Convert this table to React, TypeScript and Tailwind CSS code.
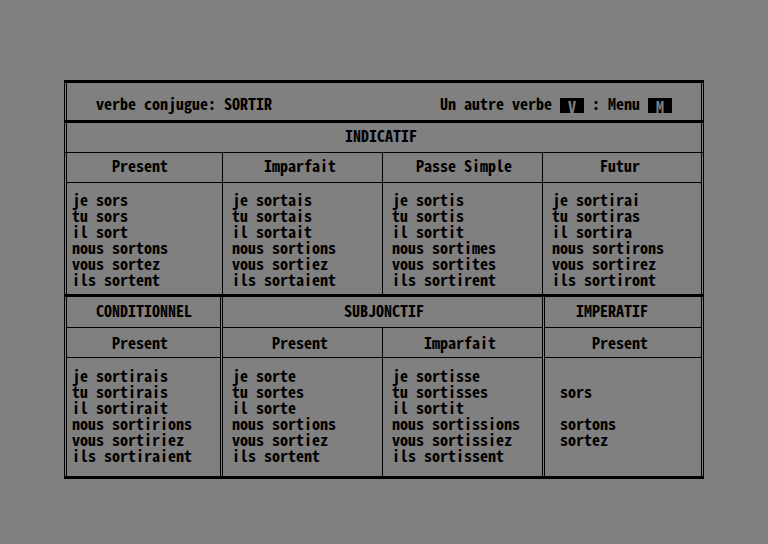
import React from "react";

type Col = {
    title: string;
    box: string;
    tpl: string;
    dpl: string;
    lines: string[];
};

const Line: React.FC<{ text: string }> = ({ text }) => (
    <div className="h-4 leading-4 whitespace-pre">{text}</div>
);

const topCols: Col[] = [
    {
        title: "Present", box: "w-[156px] border-r", tpl: "pl-[45px]", dpl: "pl-[5px]",
        lines: ["je sors", "tu sors", "il sort", "nous sortons", "vous sortez", "ils sortent"],
    },
    {
        title: "Imparfait", box: "w-[160px] border-r", tpl: "pl-[41px]", dpl: "pl-[9px]",
        lines: ["je sortais", "tu sortais", "il sortait", "nous sortions", "vous sortiez", "ils sortaient"],
    },
    {
        title: "Passe Simple", box: "w-[160px] border-r", tpl: "pl-[33px]", dpl: "pl-[9px]",
        lines: ["je sortis", "tu sortis", "il sortit", "nous sortimes", "vous sortites", "ils sortirent"],
    },
    {
        title: "Futur", box: "flex-1", tpl: "pl-[57px]", dpl: "pl-[9px]",
        lines: ["je sortirai", "tu sortiras", "il sortira", "nous sortirons", "vous sortirez", "ils sortiront"],
    },
];

const Cell: React.FC<{ col: Col; sub: string; data: string }> = ({ col, sub, data }) => (
    <div className={`flex flex-col border-black ${col.box}`}>
        <div className={`border-b border-black ${sub} ${col.tpl}`}>
            <Line text={col.title} />
        </div>
        <div className={`flex-1 ${data} ${col.dpl}`}>
            {col.lines.map((l, i) => <Line key={i} text={l} />)}
        </div>
    </div>
);

const KeyBox: React.FC<{ k: string }> = ({ k }) => (
    <span className="mt-[3px] flex h-[15px] w-6 items-center justify-center bg-black text-[#808080]">{k}</span>
);

export default function App() {
    return (
        <div className="h-[544px] w-[768px] bg-[#808080] pl-16 pt-20 font-['Noto_Sans_Mono_CJK_JP','DejaVu_Sans_Mono',monospace] text-[16px] font-bold text-black">
            <div className="w-[640px] border-y-[3px] border-black">
                <div className="border-x-[3px] border-double border-black">
                    {/* header */}
                    <div className="-mx-[3px] flex h-10 justify-between border-b-[3px] border-black px-8 pt-[12px]">
                        <Line text="verbe conjugue: SORTIR" />
                        <div className="flex h-4 items-start leading-4 whitespace-pre">
                            <span>Un autre verbe </span>
                            <KeyBox k="V" />
                            <span> : Menu </span>
                            <KeyBox k="M" />
                        </div>
                    </div>

                    <div className="-mx-[3px] h-[30px] border-b border-black pl-[281px] pt-[4px]">
                        <Line text="INDICATIF" />
                    </div>

                    <div className="-mx-[3px] flex h-[144px] border-b-[3px] border-black px-[3px]">
                        {topCols.map(c => (
                            <Cell key={c.title} col={c} sub="h-[30px] pt-[4px]" data="pt-[8px]" />
                        ))}
                    </div>

                    {/* bottom section */}
                    <div className="flex h-[179px]">
                        <div className="flex w-[156px] flex-col border-r-[3px] border-double border-black">
                            <div className="h-[31px] border-b border-black pl-[29px] pt-[5px]">
                                <Line text="CONDITIONNEL" />
                            </div>
                            <Cell
                                col={{
                                    title: "Present", box: "flex-1", tpl: "pl-[45px]", dpl: "pl-[5px]",
                                    lines: ["je sortirais", "tu sortirais", "il sortirait", "nous sortirions", "vous sortiriez", "ils sortiraient"],
                                }}
                                sub="h-[30px] pt-[6px]" data="pt-[9px]" />
                        </div>

                        <div className="flex w-[322px] flex-col border-r-[3px] border-double border-black">
                            <div className="h-[31px] border-b border-black pl-[121px] pt-[5px]">
                                <Line text="SUBJONCTIF" />
                            </div>
                            <div className="flex flex-1">
                                <Cell
                                    col={{
                                        title: "Present", box: "w-[160px] border-r", tpl: "pl-[49px]", dpl: "pl-[9px]",
                                        lines: ["je sorte", "tu sortes", "il sorte", "nous sortions", "vous sortiez", "ils sortent"],
                                    }}
                                    sub="h-[30px] pt-[6px]" data="pt-[9px]" />
                                <Cell
                                    col={{
                                        title: "Imparfait", box: "flex-1", tpl: "pl-[41px]", dpl: "pl-[9px]",
                                        lines: ["je sortisse", "tu sortisses", "il sortit", "nous sortissions", "vous sortissiez", "ils sortissent"],
                                    }}
                                    sub="h-[30px] pt-[6px]" data="pt-[9px]" />
                            </div>
                        </div>

                        <div className="flex flex-1 flex-col">
                            <div className="h-[31px] border-b border-black pl-[31px] pt-[5px]">
                                <Line text="IMPERATIF" />
                            </div>
                            <Cell
                                col={{
                                    title: "Present", box: "flex-1", tpl: "pl-[47px]", dpl: "pl-[15px]",
                                    lines: ["", "sors", "", "sortons", "sortez", ""],
                                }}
                                sub="h-[30px] pt-[6px]" data="pt-[9px]" />
                        </div>
                    </div>
                </div>
            </div>
        </div>
    );
}
